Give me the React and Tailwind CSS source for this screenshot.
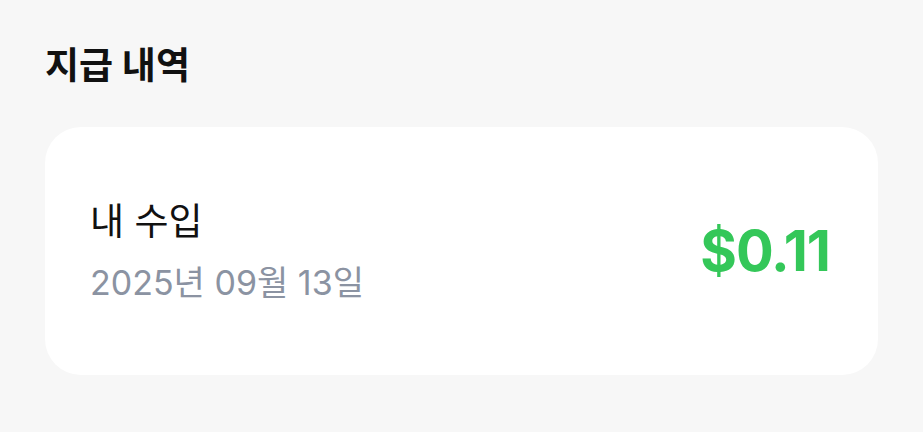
export default function App() {
  return (
    <div
      className="min-h-screen w-full bg-[#f7f7f7] px-[45px] pt-[40px]"
      style={{ fontFamily: 'Inter, "Noto Sans CJK KR", sans-serif' }}
    >
      <h1 className="text-[37px] font-bold leading-[52px] text-[#111111]">지급 내역</h1>
      <div className="mt-[35px] flex h-[248px] items-center justify-between rounded-[36px] bg-white pl-[45px] pr-[48px]">
        <div className="flex flex-col">
          <p className="text-[37px] leading-[44px] text-[#111111]">내 수입</p>
          <p className="mt-[19px] text-[34px] leading-[40px] text-[#8b93a2]">2025년 09월 13일</p>
        </div>
        <p className="text-[56px] font-bold leading-none tracking-[-1px] text-[#34c759]">$0.11</p>
      </div>
    </div>
  );
}
